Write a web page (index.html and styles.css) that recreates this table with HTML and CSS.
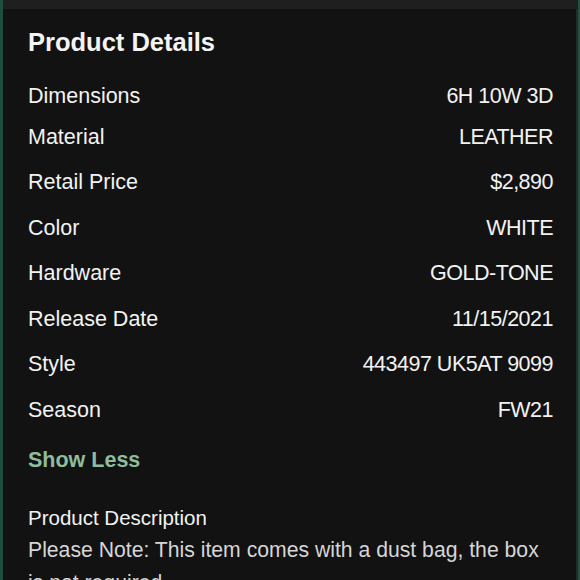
FILE: index.html
```html
<!doctype html>
<html lang="en">
 <head>
  <meta charset="UTF-8">
  <meta name="viewport" content="width=device-width, initial-scale=1.0">
  <title>Product Details</title>
  <link rel="stylesheet" href="styles.css">
 </head>
 <body>
  <div class="frame">
   <div class="topbar"></div>
   <div class="panel">
    <h2 class="title">Product Details</h2>

    <div class="details">
     <div class="row"><span class="label">Dimensions</span><span class="value">6H 10W 3D</span></div>
     <div class="row"><span class="label">Material</span><span class="value">LEATHER</span></div>
     <div class="row"><span class="label">Retail Price</span><span class="value">$2,890</span></div>
     <div class="row"><span class="label">Color</span><span class="value">WHITE</span></div>
     <div class="row"><span class="label">Hardware</span><span class="value">GOLD-TONE</span></div>
     <div class="row"><span class="label">Release Date</span><span class="value">11/15/2021</span></div>
     <div class="row"><span class="label">Style</span><span class="value">443497 UK5AT 9099</span></div>
     <div class="row"><span class="label">Season</span><span class="value">FW21</span></div>
    </div>

    <button class="toggle">Show Less</button>

    <!-- description -->
    <div class="description">
     <h3>Product Description</h3>
     <p>Please Note: This item comes with a dust bag, the box is not required.</p>
    </div>
   </div>
  </div>
 </body>
</html>
```

FILE: styles.css
```css
html, body {
    margin: 0;
    height: 100%;
    overflow: hidden;
}
body {
    background: #121212;
    font-family: "Liberation Sans", Arial, sans-serif;
    color: #f2f2f2;
}
.frame {
    height: 100%;
    border-left: 3px solid #1d4f3c;
    border-right: 2px solid #1d5441;
    box-shadow: inset -2px 0 0 #2a2a2a;
    box-sizing: border-box;
}
.topbar {
    height: 9px;
    background: #1f1f1f;
}
.panel {
    padding: 18px 25px 0 25px;
}
.title {
    margin: 0;
    font-size: 25.5px;
    line-height: 30px;
    font-weight: bold;
    color: #f4f4f4;
}
.details {
    margin-top: 20px;
}
.row {
    display: flex;
    justify-content: space-between;
    height: 45.5px;
    align-items: center;
    font-size: 21.5px;
    line-height: 26px;
}
.row:first-child {
    height: 37px;
}
.value {
    letter-spacing: -0.5px;
}
.toggle {
    display: block;
    margin-top: 12px;
    padding: 0;
    border: none;
    background: none;
    font-family: inherit;
    font-size: 21.5px;
    line-height: 30px;
    font-weight: bold;
    color: #8fbc9c;
    cursor: pointer;
}
.description {
    margin-top: 28px;
}
.description h3 {
    margin: 0;
    font-size: 20.5px;
    line-height: 30px;
    font-weight: normal;
    color: #f2f2f2;
}
.description p {
    margin: 0;
    font-size: 21.2px;
    line-height: 33px;
    color: #d6d6d6;
}
```
